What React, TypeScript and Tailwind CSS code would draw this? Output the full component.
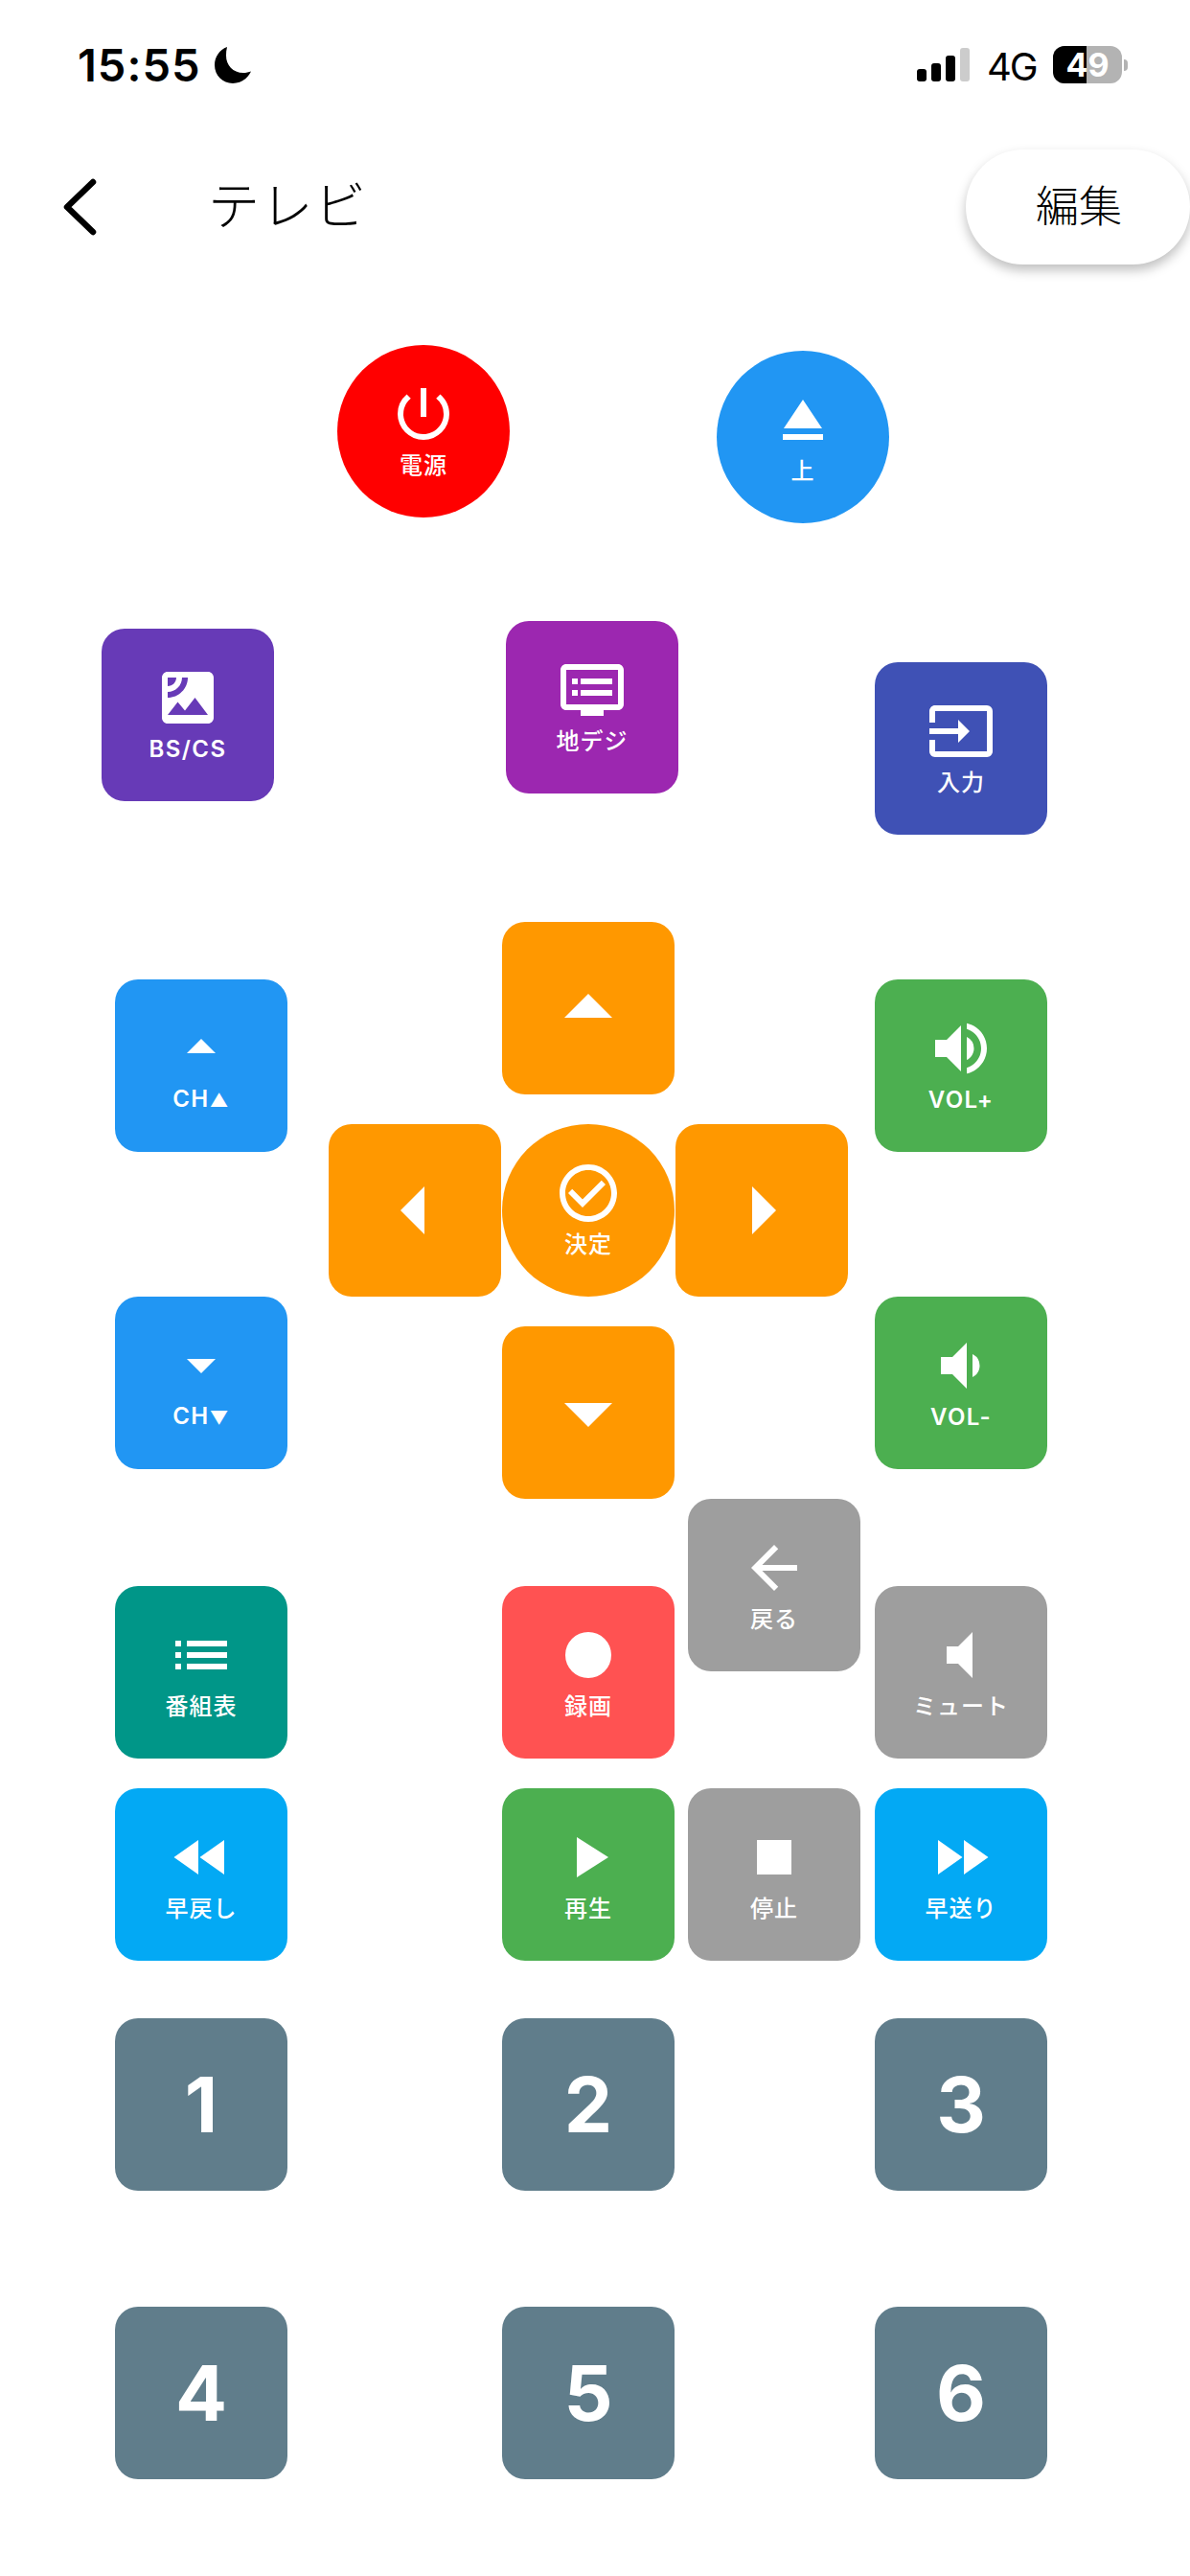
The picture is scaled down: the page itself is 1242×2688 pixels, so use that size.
import React from "react";
import {
  MdPowerSettingsNew, MdEject, MdSatellite, MdDvr, MdInput, MdArrowDropUp, MdArrowDropDown,
  MdArrowLeft, MdArrowRight, MdCheckCircleOutline, MdVolumeUp, MdVolumeDown, MdVolumeMute,
  MdList, MdFiberManualRecord, MdPlayArrow, MdStop, MdFastRewind, MdFastForward, MdArrowBack,
} from "react-icons/md";

type BtnProps = {
  bg: string;
  Icon?: React.ComponentType<{ size?: number }>;
  size?: number;
  label?: React.ReactNode;
  latin?: boolean;
  round?: boolean;
  className?: string;
  numeral?: string;
};

function Btn({ bg, Icon, size = 72, label, latin, round, className = "", numeral }: BtnProps) {
  return (
    <button
      className={`flex h-[180px] w-[180px] shrink-0 flex-col items-center justify-center text-white ${round ? "rounded-full" : "rounded-[24px]"} ${bg} ${className}`}
    >
      {Icon && <Icon size={size} />}
      {label && (
        <span className={`text-[24px] leading-[36px] whitespace-nowrap ${latin ? "font-semibold tracking-[1.4px]" : "font-medium tracking-[1px]"}`}>
          {label}
        </span>
      )}
      {numeral && <span className="text-[80px] leading-none font-bold">{numeral}</span>}
    </button>
  );
}

function StatusBar() {
  return (
    <div className="flex h-[156px] items-start justify-between pt-[48px]">
      <div className="ml-[81px] flex items-center gap-[14px]">
        <span className="text-[47px] leading-[39px] font-semibold tracking-[1px] text-black">15:55</span>
        <svg width="38" height="38" viewBox="0 0 38 38">
          <path d="M13 0C5 3 0 10.500 0 19c0 10.500 8.500 19 19 19 8.500 0 15.500-5 19-12.500-2 .8-5.500 1.500-8 1.500C19 27 12 19 12 9c0-3 .2-6 1-9z" fill="#000" />
        </svg>
      </div>
      <div className="mr-[65px] flex h-[39px] items-end">
        <div className="mb-[2px] flex items-end gap-[5px]">
          <div className="h-[13px] w-[10px] rounded-[3px] bg-black" />
          <div className="h-[19px] w-[10px] rounded-[3px] bg-black" />
          <div className="h-[27px] w-[10px] rounded-[3px] bg-black" />
          <div className="h-[35px] w-[10px] rounded-[3px] bg-[#cccccc]" />
        </div>
        <span className="mb-[2px] ml-[18px] w-[50px] text-[40px] leading-[30px] tracking-[-2px] whitespace-nowrap text-black">4G</span>
        <div className="relative ml-[19px] flex h-[39px] w-[72px] overflow-hidden rounded-[12px] bg-[#b3b3b3]">
          <div className="h-full w-[35px] bg-black" />
          <span className="absolute inset-0 flex items-center justify-center text-[34px] leading-none font-bold text-white">49</span>
        </div>
        <div className="mb-[13px] ml-[2px] h-[12px] w-[4px] rounded-r-[4px] bg-[#b3b3b3]" />
      </div>
    </div>
  );
}

function Header() {
  return (
    <div className="flex h-[120px] items-center">
      <svg width="40" height="60" viewBox="0 0 40 60" className="ml-[64px]">
        <path d="M33 4 L6 30 L33 56" fill="none" stroke="#000" strokeWidth="6.500" strokeLinecap="round" strokeLinejoin="round" />
      </svg>
      <span className="ml-[113px] text-[54px] leading-none font-light tracking-[1.500px] text-black">テレビ</span>
      <button className="ml-auto h-[120px] w-[234px] rounded-full bg-white pl-[2px] text-[45px] font-light text-black shadow-[0_6px_12px_rgba(0,0,0,0.25)]">編集</button>
    </div>
  );
}

export default function App() {
  return (
    <div className="h-[2688px] w-[1242px] overflow-hidden bg-white font-['Inter','Noto_Sans_CJK_JP',sans-serif]">
      <StatusBar />
      <Header />

      <div className="mt-[84px] flex items-start pl-[352px]">
        <Btn bg="bg-[#ff0000]" round Icon={MdPowerSettingsNew} label="電源" />
        <Btn bg="bg-[#2196f3]" round Icon={MdEject} label="上" className="mt-[6px] ml-[216px]" />
      </div>

      <div className="mt-[102px] flex items-start pl-[106px]">
        <Btn bg="bg-[#673ab7]" Icon={MdSatellite} label="BS/CS" latin className="mt-[8px]" />
        <Btn bg="bg-[#9c27b0]" Icon={MdDvr} label="地デジ" className="ml-[242px]" />
        <Btn bg="bg-[#3f51b5]" Icon={MdInput} label="入力" className="mt-[43px] ml-[205px]" />
      </div>

      <div className="mt-[91px] flex items-start pl-[120px]">
        <div className="mt-[60px] flex flex-col gap-[151px]">
          <Btn bg="bg-[#2196f3]" Icon={MdArrowDropUp} label={<>CH<span className="text-[19px]">▲</span></>} latin />
          <Btn bg="bg-[#2196f3]" Icon={MdArrowDropDown} label={<>CH<span className="text-[19px]">▼</span></>} latin />
        </div>
        <div className="ml-[43px] grid grid-cols-[180px_180px_180px] gap-x-[1px] gap-y-[31px]">
          <div />
          <Btn bg="bg-[#ff9800]" Icon={MdArrowDropUp} size={120} />
          <div />
          <Btn bg="bg-[#ff9800]" Icon={MdArrowLeft} size={120} />
          <Btn bg="bg-[#ff9800]" round Icon={MdCheckCircleOutline} label="決定" />
          <Btn bg="bg-[#ff9800]" Icon={MdArrowRight} size={120} />
          <div />
          <Btn bg="bg-[#ff9800]" Icon={MdArrowDropDown} size={120} />
          <div />
        </div>
        <div className="mt-[60px] ml-[28px] flex flex-col gap-[151px]">
          <Btn bg="bg-[#4caf50]" Icon={MdVolumeUp} label="VOL+" latin />
          <Btn bg="bg-[#4caf50]" Icon={MdVolumeDown} label="VOL-" latin />
        </div>
      </div>

      <div className="flex items-start pl-[120px]">
        <div className="mt-[91px] flex flex-col gap-[31px]">
          <Btn bg="bg-[#009688]" Icon={MdList} label="番組表" />
          <Btn bg="bg-[#03a9f4]" Icon={MdFastRewind} label="早戻し" />
        </div>
        <div className="mt-[91px] ml-[224px] flex flex-col gap-[31px]">
          <Btn bg="bg-[#ff5252]" Icon={MdFiberManualRecord} label="録画" />
          <Btn bg="bg-[#4caf50]" Icon={MdPlayArrow} label="再生" />
        </div>
        <div className="ml-[14px] flex flex-col gap-[122px]">
          <Btn bg="bg-[#9e9e9e]" Icon={MdArrowBack} label="戻る" />
          <Btn bg="bg-[#9e9e9e]" Icon={MdStop} label="停止" />
        </div>
        <div className="mt-[91px] ml-[15px] flex flex-col gap-[31px]">
          <Btn bg="bg-[#9e9e9e]" Icon={MdVolumeMute} label="ミュート" />
          <Btn bg="bg-[#03a9f4]" Icon={MdFastForward} label="早送り" />
        </div>
      </div>

      <div className="mt-[60px] grid grid-cols-[180px_180px_180px] justify-start gap-x-[224px] gap-y-[121px] pl-[120px] [&>*:nth-child(3n)]:ml-[-15px]">
        <Btn bg="bg-[#607d8b]" numeral="1" />
        <Btn bg="bg-[#607d8b]" numeral="2" />
        <Btn bg="bg-[#607d8b]" numeral="3" />
        <Btn bg="bg-[#607d8b]" numeral="4" />
        <Btn bg="bg-[#607d8b]" numeral="5" />
        <Btn bg="bg-[#607d8b]" numeral="6" />
      </div>
    </div>
  );
}
